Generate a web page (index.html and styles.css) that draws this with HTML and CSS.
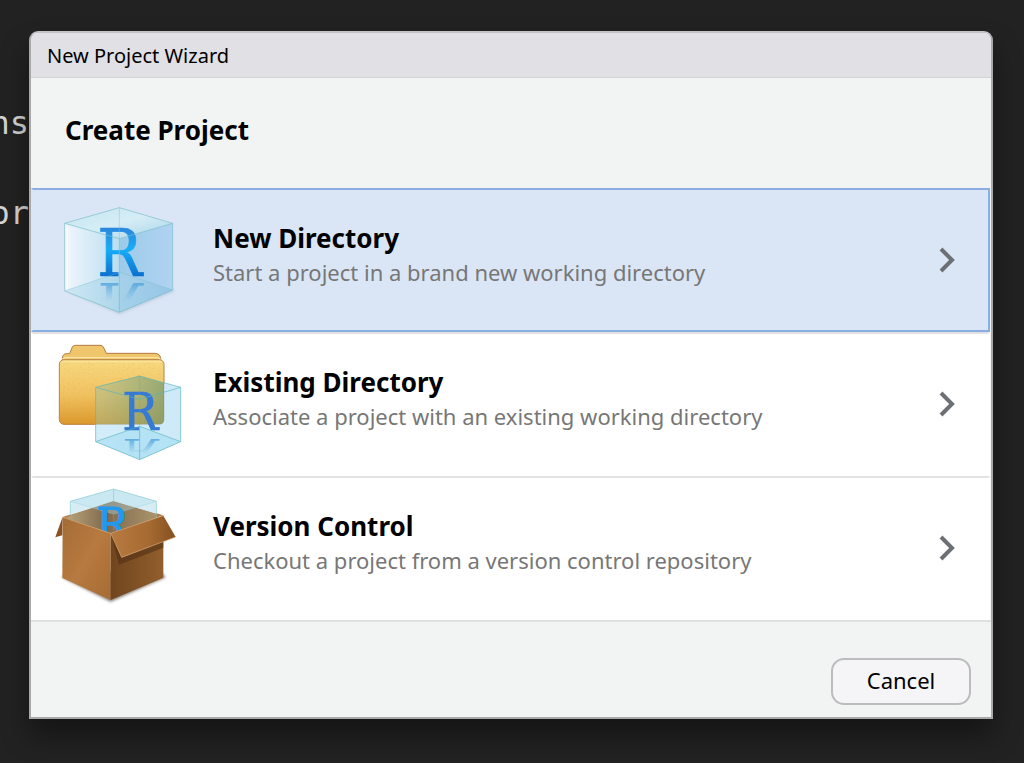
FILE: index.html
```html
<!DOCTYPE html>
<html lang="en">
<head>
  <meta charset="UTF-8" />
  <title>New Project Wizard</title>
  <link rel="stylesheet" href="styles.css">
</head>

<body>

  <!-- editor behind the dialog -->
  <div class="editor">
    <p>ns</p>
    <p>or</p>
  </div>

  <div class="wizard" role="dialog" aria-labelledby="wizard-title">
    <div class="titlebar" id="wizard-title">New Project Wizard</div>

    <h1 class="heading">Create Project</h1>

    <div class="choices">
      <button class="choice selected" type="button">
        <svg class="icon" viewBox="24 -3 396 396" aria-hidden="true">
          <defs>
            <linearGradient id="left" x1="0" x2="1"><stop offset="0" stop-color="#f1f6fd"/><stop offset="1" stop-color="#b9def0"/></linearGradient>
            <linearGradient id="right" x1="0" x2="1"><stop offset="0" stop-color="#9bcbe8"/><stop offset="1" stop-color="#b0d3f2"/></linearGradient>
            <linearGradient id="top" x1="0" x2="1" y2="1"><stop offset="0" stop-color="#c3e5ee"/><stop offset=".5" stop-color="#d6edf6"/><stop offset="1" stop-color="#a5d3e9"/></linearGradient>
            <linearGradient id="floor" x1="0" x2="1"><stop offset="0" stop-color="#c4e4f1"/><stop offset="1" stop-color="#8dc2e2"/></linearGradient>
            <linearGradient id="letter" gradientUnits="userSpaceOnUse" x1="0" x2="0" y1="97" y2="245"><stop offset="0" stop-color="#2b86dd"/><stop offset=".45" stop-color="#17adf6"/><stop offset="1" stop-color="#0a6fd0"/></linearGradient>
            <linearGradient id="mirror" gradientUnits="userSpaceOnUse" x1="0" x2="0" y1="0" y2="-75"><stop offset="0" stop-color="#4a9fdc" stop-opacity=".8"/><stop offset="1" stop-color="#6db4df" stop-opacity="0"/></linearGradient>
            <filter id="soft" x="-20%" y="-20%" width="140%" height="150%"><feGaussianBlur stdDeviation="5"/></filter>
          </defs>
          <path d="M70 290L223 357L388 289L370 270Z" fill="#7f96b0" opacity=".35" filter="url(#soft)"/>
          <path d="M59 85L223 131V352L59 288Z" fill="url(#left)"/>
          <path d="M223 131L383 85V285L223 352Z" fill="url(#right)"/>
          <path d="M59 288L223 232L383 285L223 352Z" fill="url(#floor)" opacity=".75"/>
          <path d="M59 85L223 38L383 85L223 131Z" fill="url(#top)"/>
          <path d="M67 97V282" stroke="#fff" stroke-width="5" opacity=".7"/>
          <text class="letter" x="157" y="244" font-size="199" fill="url(#letter)" stroke="url(#letter)" stroke-width="2">R</text>
          <g transform="translate(157 263) scale(1 -.75)"><text class="letter" x="0" y="0" font-size="199" fill="url(#mirror)">R</text></g>
          <g fill="none" stroke="#78bdc8" stroke-width="2.5" opacity=".8">
            <path d="M223 38L383 85V285L223 352L59 288V85ZM59 85L223 131L383 85M223 131V352"/>
            <path d="M223 38V131M59 288L223 232L383 285" opacity=".6"/>
          </g>
        </svg>
        <span class="text">
          <span class="name">New Directory</span>
          <span class="description">Start a project in a brand new working directory</span>
        </span>
        <svg class="chevron" viewBox="0 0 16 26" aria-hidden="true"><path d="M2 2L13 13L2 24"/></svg>
      </button>

      <button class="choice" type="button">
        <svg class="icon" viewBox="24 9 396 396" aria-hidden="true">
          <defs>
            <linearGradient id="folder" x1="0" x2="0" y1="0" y2="1"><stop offset="0" stop-color="#f8d980"/><stop offset=".55" stop-color="#f0c160"/><stop offset="1" stop-color="#dc982c"/></linearGradient>
            <linearGradient id="glass" x1="0" x2="1"><stop offset="0" stop-color="#b5ddf3" stop-opacity=".4"/><stop offset="1" stop-color="#83c5ec" stop-opacity=".45"/></linearGradient>
            <linearGradient id="shade" x1="0" x2="1"><stop offset="0" stop-color="#8c9b35" stop-opacity=".25"/><stop offset="1" stop-color="#5d8132" stop-opacity=".6"/></linearGradient>
            <filter id="grain" x="0" y="0" width="100%" height="100%"><feTurbulence baseFrequency=".4" numOctaves="2"/><feColorMatrix values="0 0 0 0 .65  0 0 0 0 .4  0 0 0 0 .05  0 0 0 1.2 -.4"/><feComposite in2="SourceGraphic" operator="in"/></filter>
          </defs>
          <path d="M52 84V70Q53 56 65 56H74L82 36Q84 31 92 31H165Q173 31 175 36L184 55H330Q345 56 347 70V84Z" fill="#efc66c" stroke="#b37a43" stroke-width="3"/>
          <path d="M52 72Q58 68 66 68H335Q346 69 348 78" fill="none" stroke="#fae5a2" stroke-width="4"/>
          <rect x="43" y="74" width="314" height="194" rx="14" fill="url(#folder)" stroke="#b88245" stroke-width="3"/>
          <rect x="46" y="77" width="308" height="188" rx="12" filter="url(#grain)" opacity=".8"/>
          <path d="M49 80H351" stroke="#fae8a8" stroke-width="3"/>
          <path d="M152 157L284 123L357 144V254Q357 268 343 268H152Z" fill="url(#shade)"/>
          <path d="M152 157L284 123L407 157V320L284 374L152 320Z" fill="url(#glass)" opacity=".6"/>
          <path d="M357 144L407 157V320L284 374L152 320V268H343Q357 268 357 254Z" fill="#c4e7f8" opacity=".65"/>
          <path d="M152 320L284 274L407 320L284 374Z" fill="#9eddf3" opacity=".55"/>
          <text class="letter" x="232" y="285" font-size="159" fill="#367ad3" stroke="#367ad3" stroke-width="2">R</text>
          <g transform="translate(232 312) scale(1 -.62)"><text class="letter" x="0" y="0" font-size="159" fill="url(#mirror)">R</text></g>
          <g fill="none" stroke="#55b3b8" stroke-width="2.5" opacity=".75">
            <path d="M284 123L407 157V320L284 374L152 320V157ZM152 157L284 193L407 157M284 274V374M152 320L284 274L407 320"/>
            <path d="M284 123V274" opacity=".55"/>
          </g>
        </svg>
        <span class="text">
          <span class="name">Existing Directory</span>
          <span class="description">Associate a project with an existing working directory</span>
        </span>
        <svg class="chevron" viewBox="0 0 16 26" aria-hidden="true"><path d="M2 2L13 13L2 24"/></svg>
      </button>

      <button class="choice" type="button">
        <svg class="icon" viewBox="24 6 396 396" aria-hidden="true">
          <defs>
            <linearGradient id="box-left" x1="0" x2="1" y2="1"><stop offset="0" stop-color="#a36c35"/><stop offset=".5" stop-color="#b77a40"/><stop offset="1" stop-color="#a66c33"/></linearGradient>
            <linearGradient id="box-right" x1="0" x2="1"><stop offset="0" stop-color="#70451f"/><stop offset="1" stop-color="#925e2c"/></linearGradient>
            <linearGradient id="flap" x1="0" x2="1"><stop offset="0" stop-color="#b87a40"/><stop offset=".6" stop-color="#a56a32"/><stop offset="1" stop-color="#83501f"/></linearGradient>
            <linearGradient id="inside" x1="0" x2="1"><stop offset="0" stop-color="#b9a77f"/><stop offset=".45" stop-color="#80694b"/><stop offset="1" stop-color="#aa946c"/></linearGradient>
            <clipPath id="opening"><path d="M60 10H360V105L197 159L53 113Z"/></clipPath>
          </defs>
          <path d="M48 290L197 365L362 292L330 260Z" fill="#443322" opacity=".65" filter="url(#soft)"/>
          <path d="M53 111L205 62L355 106L197 160Z" fill="#b57c45"/>
          <path d="M76 107L205 63L334 101L330 115L197 160L60 115Z" fill="url(#inside)"/>
          <path d="M76 64L206 27L334 64V101L205 63L76 105Z" fill="#d7edf5"/>
          <path d="M76 64L206 103L334 64L206 27Z" fill="#b3dfec" opacity=".38"/>
          <g fill="none" stroke="#82c7ce" stroke-width="2.5" opacity=".75">
            <path d="M76 107V64L206 27L334 64V112M206 27V65"/>
            <path d="M76 64L206 103L334 64M206 103V150" opacity=".45"/>
          </g>
          <g clip-path="url(#opening)"><text class="letter" x="154" y="183" font-size="142" fill="#2299ed" stroke="#2299ed" stroke-width="3">R</text></g>
          <path d="M53 110L31 172L52 166Z" fill="#8b5125"/>
          <path d="M53 111L197 160V360L52 294Z" fill="url(#box-left)"/>
          <path d="M197 160L355 107V293L197 360Z" fill="url(#box-right)"/>
          <path d="M199 165L222 254L355 203V180L235 220Z" fill="#503014" opacity=".6"/>
          <path d="M197 160L355 107L392 171L230 233Z" fill="url(#flap)"/>
          <path d="M53 112L197 160L230 232L391 171M197 160L355 107" fill="none" stroke="#d4a777" stroke-width="2.5" opacity=".8"/>
        </svg>
        <span class="text">
          <span class="name">Version Control</span>
          <span class="description">Checkout a project from a version control repository</span>
        </span>
        <svg class="chevron" viewBox="0 0 16 26" aria-hidden="true"><path d="M2 2L13 13L2 24"/></svg>
      </button>
    </div>

    <div class="footer">
      <button class="btn" type="button">Cancel</button>
    </div>
  </div>

</body>
</html>
```
FILE: styles.css
```css
* {
  box-sizing: border-box;
}

body {
  margin: 0;
  min-height: 100vh;
  padding: 31px 31px 44px 29px;
  position: relative;
  overflow: hidden;
  background: #222;
  color: #000;
  font-family: "Lucida Grande", "Noto Sans", sans-serif;
}

/* lies under the dialog, only its left edge shows */
.editor {
  position: absolute;
  top: 78px;
  left: 0;
  width: 29px;
  display: flex;
  flex-direction: column;
  align-items: flex-end;
  color: #d4d4d4;
  font-family: "DejaVu Sans Mono", monospace;
  font-size: 32px;
  line-height: 90px;
}

.editor p {
  margin: 0;
}

.wizard {
  position: relative;
  background: #f2f4f4;
  border: 2px solid #a9a9a9;
  border-top-color: #c4c4c7;
  border-radius: 9px 9px 0 0;
  box-shadow: 0 16px 28px rgba(0, 0, 0, 0.4);
}

.titlebar {
  height: 45px;
  padding: 0 16px;
  background: #e1e1e5;
  border-bottom: 1px solid #d2d3d5;
  border-radius: 7px 7px 0 0;
  font-size: 20px;
  line-height: 46px;
}

.heading {
  margin: 0;
  padding: 0 34px 6px;
  font-size: 26px;
  line-height: 104px;
}

.choices {
  padding-right: 1px;
  border-bottom: 2px solid #dedfe0;
}

.choice {
  width: 100%;
  height: 144px;
  padding: 0 33px 0 20px;
  display: flex;
  align-items: center;
  background: #fff;
  border: 2px solid #fff;
  font-family: inherit;
  text-align: left;
  cursor: pointer;
}

.choice + .choice {
  border-top-color: #e2e2e2;
}

.choice.selected {
  background: #dae6f6;
  border-color: #8aaee3;
  border-left-color: #dae6f6;
}

.icon {
  flex: none;
  width: 132px;
  height: 132px;
}

.letter {
  font-family: "DejaVu Serif Condensed", "DejaVu Serif", serif;
}

.text {
  flex: 1;
  margin-left: 28px;
  padding-bottom: 11px;
}

.name,
.description {
  display: block;
  line-height: 34px;
}

.name {
  color: #000;
  font-size: 26px;
  font-weight: bold;
}

.description {
  color: #777;
  font-size: 22px;
}

.chevron {
  flex: none;
  width: 16px;
  height: 26px;
  fill: none;
  stroke: #6c7074;
  stroke-width: 4;
}

.footer {
  padding: 36px 20px 12px;
  display: flex;
  justify-content: flex-end;
}

.btn {
  width: 140px;
  height: 47px;
  padding-bottom: 4px;
  background: #f5f5f8;
  border: 2px solid #bcbcbe;
  border-radius: 13px;
  color: #000;
  font-family: inherit;
  font-size: 22px;
  cursor: pointer;
}
```
